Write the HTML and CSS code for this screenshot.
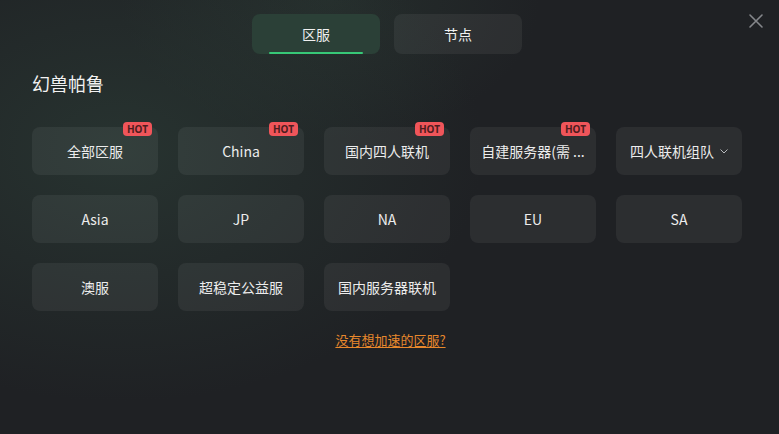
FILE: index.html
```html
<!DOCTYPE html>
<html lang="zh-CN">
<head>
  <meta charset="UTF-8">
  <meta name="viewport" content="width=device-width, initial-scale=1.0">
  <title>幻兽帕鲁 - 区服</title>
  <link rel="stylesheet" href="styles.css">
</head>
<body>
  <div class="panel">
    <button class="close" type="button" aria-label="关闭">
      <svg width="16" height="16" viewBox="0 0 16 16"><path d="M2 2L14 14M14 2L2 14" stroke="#85878b" stroke-width="1.6" stroke-linecap="round"/></svg>
    </button>

    <div class="tabs">
      <button class="tab active" type="button">区服</button>
      <button class="tab" type="button">节点</button>
    </div>

    <h1 class="game-title">幻兽帕鲁</h1>

    <div class="grid">
      <button class="card" type="button">全部区服<span class="hot">HOT</span></button>
      <button class="card" type="button">China<span class="hot">HOT</span></button>
      <button class="card" type="button">国内四人联机<span class="hot">HOT</span></button>
      <button class="card" type="button"><span class="clip">自建服务器(需 ...</span><span class="hot">HOT</span></button>
      <button class="card" type="button">四人联机组队
        <svg class="chevron" width="8" height="5" viewBox="0 0 8 5"><path d="M0.5 0.5L4 4L7.5 0.5" fill="none" stroke="#b8babd" stroke-width="1"/></svg>
      </button>

      <button class="card" type="button">Asia</button>
      <button class="card" type="button">JP</button>
      <button class="card" type="button">NA</button>
      <button class="card" type="button">EU</button>
      <button class="card" type="button">SA</button>

      <button class="card" type="button">澳服</button>
      <button class="card" type="button">超稳定公益服</button>
      <button class="card" type="button">国内服务器联机</button>
    </div>

    <div class="footer">
      <a href="#" class="missing">没有想加速的区服?</a>
    </div>
  </div>
</body>
</html>
```

FILE: styles.css
```css
html, body {
  margin: 0;
  height: 100%;
}
body {
  font-family: "Noto Sans CJK SC", "Noto Sans", sans-serif;
  background-color: #1f2124;
  background-image:
    radial-gradient(ellipse 520px 360px at 120px 150px, rgba(46, 66, 58, 0.55), rgba(46, 66, 58, 0) 70%),
    radial-gradient(ellipse 300px 200px at 330px 0px, rgba(46, 64, 56, 0.4), rgba(46, 64, 56, 0) 70%);
  color: #ececec;
  overflow: hidden;
}
button {
  font-family: inherit;
  border: none;
  cursor: pointer;
}
.panel {
  position: relative;
  padding: 14px 37px 0 32px;
}
.close {
  position: absolute;
  top: 13px;
  right: 15px;
  width: 16px;
  height: 16px;
  padding: 0;
  background: none;
}
.close svg {
  display: block;
}
.tabs {
  display: flex;
  gap: 14px;
  margin-left: 220px;
}
.tab {
  position: relative;
  width: 128px;
  height: 40px;
  border-radius: 8px;
  background: rgba(255, 255, 255, 0.06);
  color: #f0f0f0;
  font-size: 14px;
}
.tab.active {
  background: #2b4037;
}
.tab.active::after {
  content: "";
  position: absolute;
  left: 17px;
  right: 17px;
  bottom: 0;
  height: 2px;
  border-radius: 1px;
  background: #37c877;
}
.game-title {
  margin: 17px 0 0;
  font-size: 18px;
  font-weight: 400;
  line-height: 24px;
  color: #f2f2f2;
}
.grid {
  display: grid;
  grid-template-columns: repeat(5, 126px);
  gap: 20px;
  margin-top: 32px;
}
.card {
  position: relative;
  height: 48px;
  border-radius: 8px;
  background: rgba(255, 255, 255, 0.06);
  color: #ececec;
  font-size: 14px;
  display: flex;
  align-items: center;
  justify-content: center;
  gap: 6px;
  padding: 0 8px;
  white-space: nowrap;
}
.clip {
  overflow: hidden;
}
.chevron {
  margin-top: 1px;
}
.hot {
  position: absolute;
  top: -5px;
  right: 6px;
  height: 14px;
  padding: 0 4px;
  border-radius: 4px;
  background: #f0555a;
  color: #4e1c1e;
  font-family: "Noto Sans", sans-serif;
  font-size: 10px;
  font-weight: 700;
  line-height: 14px;
}
.footer {
  margin-top: 15px;
  padding-left: 7px;
  text-align: center;
}
.missing {
  color: #e8882c;
  font-size: 13px;
  text-decoration: underline;
  text-underline-offset: 2px;
}
```
